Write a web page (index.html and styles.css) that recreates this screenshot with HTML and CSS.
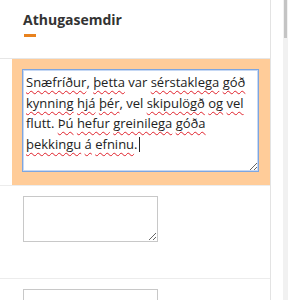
FILE: index.html
```html
<!DOCTYPE html>
<html>
<head>
<meta charset="UTF-8">
<title>Athugasemdir</title>
<link rel="stylesheet" href="styles.css">
</head>
<body>

<div class="panel">
  <div class="head">
    <h3 class="title">Athugasemdir</h3>
    <span class="bar"></span>
  </div>

  <div class="row">
    <div class="cell active">
      <div class="note" role="textbox" contenteditable="true" spellcheck="true"><span class="sp">Snæfríður</span>, <span class="sp">þetta</span> var <span class="sp">sérstaklega</span> <span class="sp">góð</span> <span class="sp">kynning</span> <span class="sp">hjá</span> <span class="sp">þér</span>, vel <span class="sp">skipulögð</span> <span class="sp">og</span> <span class="sp">vel</span> flutt. <span class="sp">Þú</span> <span class="sp">hefur</span> <span class="sp">greinilega</span> <span class="sp">góða</span> <span class="sp">þekkingu</span> <span class="sp">á</span> <span class="sp">efninu</span>.<span class="caret"></span></div>
    </div>
  </div>

  <div class="row">
    <div class="cell">
      <textarea class="small"></textarea>
    </div>
  </div>

  <div class="row">
    <div class="cell">
      <textarea class="small"></textarea>
    </div>
  </div>
</div>

<div class="scroll"><div class="thumb"></div></div>

</body>
</html>
```

FILE: styles.css
```css
*{ margin: 0; padding: 0; box-sizing: border-box; }
html, body{ height: 300px; overflow: hidden; }
body{
  display: flex; justify-content: space-between;
  font-family: "Open Sans", "Noto Sans", sans-serif; color: #333; background: #fff;
}
.panel{ width: 271px; border-right: 1px solid #e3e3e3; }
.head{ height: 59px; border-bottom: 1px solid #e6e6e6; padding: 10px 0 0 23px; }
.head .title{ font-size: 14px; line-height: 19px; font-weight: bold; color: #333; }
.head .bar{ display: block; width: 12px; height: 3px; margin: 5px 0 0 1px; background: #e8821e; }

.row{ padding-left: 12px; border-bottom: 1px solid #ececec; }
.cell{ height: 92px; padding: 10px 11px; }
.cell.active{ height: 126px; padding: 10px 10px 0 10px; background: #ffcc99; }

.note{
  width: 237px; height: 103px; padding: 2px 3px;
  background: #fff; border: 1px solid #7ea6e0; outline: 1px solid #c6d8f4; outline-offset: -2px;
  font-size: 13px; line-height: 20.5px; color: #222;
  resize: both; overflow: hidden;
}
.sp{ text-decoration: underline wavy #e0202a; text-decoration-thickness: 1px; text-underline-offset: 3px; text-decoration-skip-ink: none; }
.caret{ display: inline-block; width: 1px; height: 15px; margin-left: 1px; vertical-align: -3px; background: #222; }

textarea.small{
  display: block; width: 135px; height: 46px;
  border: 1px solid #c8c8c8; background: #fff;
}

.scroll{ width: 5px; height: 300px; background: #f1f1f1; padding-left: 1px; }
.thumb{ width: 3px; height: 38px; background: #c4c4c4; }
```
